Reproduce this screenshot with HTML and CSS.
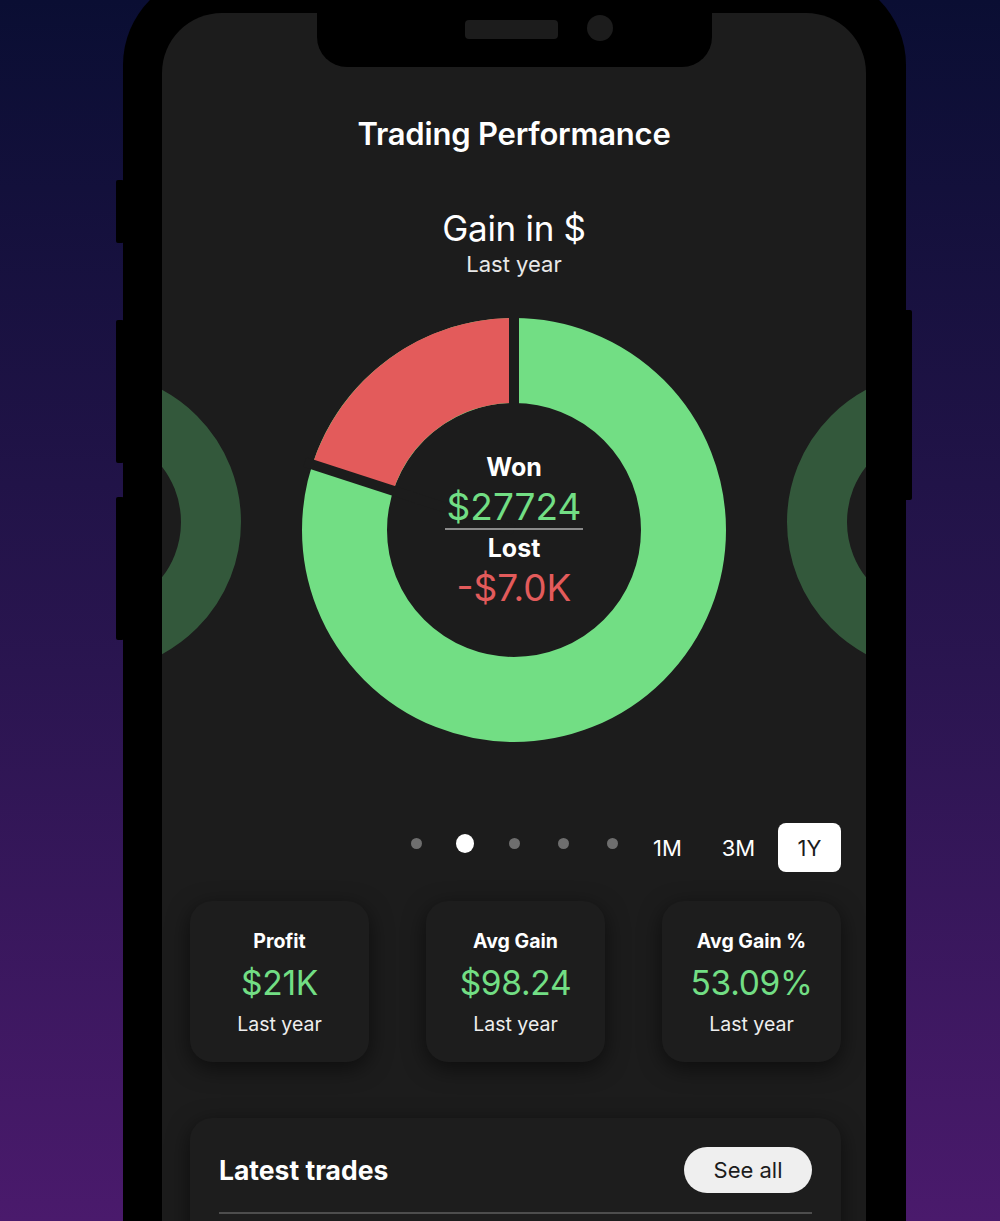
FILE: index.html
```html
<!DOCTYPE html>
<html lang="en">
<head>
  <meta charset="UTF-8">
  <title>Trading Performance</title>
  <link rel="stylesheet" href="styles.css">
</head>
<body>
  <div id="phone">
    <span class="side-btn mute"></span>
    <span class="side-btn vol-up"></span>
    <span class="side-btn vol-down"></span>
    <span class="side-btn power"></span>

    <div id="screen">
      <div id="notch">
        <span class="speaker"></span>
        <span class="camera"></span>
      </div>

      <h1 class="page-title">Trading Performance</h1>

      <div class="chart-head">
        <div class="chart-title">Gain in $</div>
        <div class="chart-sub">Last year</div>
      </div>

      <div id="carousel">
        <svg class="ghost" width="300" height="300" viewBox="0 0 300 300">
          <circle cx="150" cy="150" r="120" fill="none" stroke="#33583b" stroke-width="60"/>
        </svg>

        <div class="donut">
          <svg width="440" height="440" viewBox="0 0 440 440">
            <circle cx="220" cy="220" r="169.5" fill="none" stroke="#72de84" stroke-width="85"/>
            <path d="M 220 50.5 A 169.5 169.5 0 0 0 58.8 167.6" fill="none" stroke="#e35b5b" stroke-width="85"/>
            <line x1="220" y1="220" x2="220" y2="0" stroke="#1c1c1c" stroke-width="10"/>
            <line x1="220" y1="220" x2="10.8" y2="152" stroke="#1c1c1c" stroke-width="10"/>
          </svg>
          <div class="donut-center">
            <div class="label won-label">Won</div>
            <div class="won">$27724</div>
            <div class="label lost-label">Lost</div>
            <div class="lost">-$7.0K</div>
          </div>
        </div>

        <svg class="ghost" width="300" height="300" viewBox="0 0 300 300">
          <circle cx="150" cy="150" r="120" fill="none" stroke="#33583b" stroke-width="60"/>
        </svg>
      </div>

      <div class="pager-row">
        <div class="dots">
          <span class="dot"></span>
          <span class="dot active"></span>
          <span class="dot"></span>
          <span class="dot"></span>
          <span class="dot"></span>
        </div>
        <div class="periods">
          <button class="period">1M</button>
          <button class="period">3M</button>
          <button class="period selected">1Y</button>
        </div>
      </div>

      <div class="stats">
        <div class="stat-card">
          <div class="stat-title">Profit</div>
          <div class="stat-value">$21K</div>
          <div class="stat-sub">Last year</div>
        </div>
        <div class="stat-card">
          <div class="stat-title">Avg Gain</div>
          <div class="stat-value">$98.24</div>
          <div class="stat-sub">Last year</div>
        </div>
        <div class="stat-card">
          <div class="stat-title">Avg Gain %</div>
          <div class="stat-value">53.09%</div>
          <div class="stat-sub">Last year</div>
        </div>
      </div>

      <div class="trades-card">
        <div class="trades-head">
          <h2>Latest trades</h2>
          <button class="see-all">See all</button>
        </div>
        <div class="trades-divider"></div>
      </div>
    </div>
  </div>
</body>
</html>
```

FILE: styles.css
```css
html, body {
  margin: 0;
  padding: 0;
  height: 100%;
  overflow: hidden;
}

body {
  background: linear-gradient(to bottom, #0a0e33 0%, #2a1550 55%, #4a1a6c 100%);
  font-family: Inter, "Liberation Sans", sans-serif;
  color: #fff;
}

#phone {
  position: relative;
  width: 704px;
  margin: -27px 0 0 123px;
  padding: 40px 40px 0 39px;
  height: 1300px;
  background: #000;
  border-radius: 92px 92px 0 0;
}

.side-btn {
  position: absolute;
  width: 8px;
  background: #000;
  border-radius: 2px;
}

.side-btn.mute { left: -7px; top: 207px; height: 63px; }
.side-btn.vol-up { left: -7px; top: 347px; height: 143px; }
.side-btn.vol-down { left: -7px; top: 524px; height: 143px; }
.side-btn.power { right: -6px; top: 337px; height: 190px; }

#screen {
  position: relative;
  height: 100%;
  background: #1c1c1c;
  border-radius: 60px 60px 0 0;
  overflow: hidden;
  display: flex;
  flex-direction: column;
  align-items: center;
}

#notch {
  position: absolute;
  top: 0;
  left: 155px;
  width: 395px;
  height: 54px;
  background: #000;
  border-radius: 0 0 30px 30px;
}

#notch .speaker {
  position: absolute;
  left: 148px;
  top: 7px;
  width: 93px;
  height: 19px;
  background: #1c1c1c;
  border-radius: 4px;
}

#notch .camera {
  position: absolute;
  left: 270px;
  top: 2px;
  width: 26px;
  height: 26px;
  background: #1c1c1c;
  border-radius: 50%;
}

.page-title {
  margin: 103px 0 0;
  font-size: 31px;
  font-weight: 600;
  line-height: 36px;
  letter-spacing: -0.2px;
}

.chart-head {
  margin-top: 56px;
  text-align: center;
}

.chart-title {
  font-size: 35px;
  line-height: 40px;
  letter-spacing: -0.3px;
}

.chart-sub {
  margin-top: 3px;
  font-size: 22px;
  line-height: 26px;
  color: #e8e8e8;
}

#carousel {
  display: flex;
  justify-content: center;
  align-items: center;
  gap: 53px;
  width: 100%;
  margin-top: 33px;
}

.ghost {
  flex-shrink: 0;
  margin-bottom: 16px;
}

.donut {
  flex-shrink: 0;
  display: grid;
  place-items: center;
  width: 440px;
  height: 440px;
}

.donut svg,
.donut-center {
  grid-area: 1 / 1;
}

.donut-center {
  display: flex;
  flex-direction: column;
  align-items: center;
}

.donut-center .label {
  font-size: 25px;
  font-weight: 700;
  line-height: 30px;
}

.donut-center .won-label {
  margin-bottom: 4px;
}

.donut-center .won {
  color: #72de84;
  font-size: 37px;
  line-height: 42px;
  padding: 0 2px;
  border-bottom: 2px solid #8a8a8a;
}

.donut-center .lost-label {
  margin-top: 3px;
  margin-bottom: 4px;
}

.donut-center .lost {
  color: #e35b5b;
  font-size: 37px;
  line-height: 42px;
}

.pager-row {
  align-self: stretch;
  display: flex;
  justify-content: flex-end;
  align-items: center;
  gap: 15px;
  padding-right: 25px;
  margin-top: 73px;
}

.dots {
  display: flex;
  align-items: center;
  gap: 31px;
  margin-top: -9px;
}

.dot {
  display: flex;
  justify-content: center;
  align-items: center;
  width: 18px;
  height: 18px;
}

.dot::before {
  content: "";
  width: 11px;
  height: 11px;
  border-radius: 50%;
  background: #6e6e6e;
}

.dot.active::before {
  width: 19px;
  height: 19px;
  background: #fff;
}

.periods {
  display: flex;
  gap: 8px;
}

.period {
  width: 63px;
  height: 49px;
  border: none;
  border-radius: 8px;
  background: transparent;
  color: #fff;
  font-family: Inter, "Liberation Sans", sans-serif;
  font-size: 22px;
  padding: 0;
}

.period.selected {
  background: #fff;
  color: #1c1c1c;
}

.stats {
  align-self: stretch;
  display: flex;
  justify-content: space-between;
  padding: 0 25px 0 28px;
  margin-top: 29px;
}

.stat-card {
  box-sizing: border-box;
  width: 179px;
  height: 161px;
  padding-top: 28px;
  border-radius: 22px;
  background: #1d1d1d;
  box-shadow: 0 6px 22px rgba(0, 0, 0, 0.55);
  display: flex;
  flex-direction: column;
  align-items: center;
}

.stat-title {
  font-size: 19.5px;
  font-weight: 700;
  line-height: 24px;
}

.stat-value {
  margin-top: 10px;
  color: #72de84;
  font-size: 33.5px;
  line-height: 40px;
  letter-spacing: -0.3px;
}

.stat-sub {
  margin-top: 9px;
  font-size: 19.5px;
  line-height: 24px;
  color: #eee;
}

.trades-card {
  align-self: stretch;
  margin: 56px 25px 0 28px;
  padding: 29px 29px 0;
  border-radius: 22px;
  background: #1d1d1d;
  box-shadow: 0 6px 22px rgba(0, 0, 0, 0.55);
  height: 200px;
}

.trades-head {
  display: flex;
  justify-content: space-between;
  align-items: center;
}

.trades-head h2 {
  margin: 0;
  font-size: 26.5px;
  font-weight: 700;
}

.see-all {
  width: 128px;
  height: 46px;
  border: none;
  border-radius: 23px;
  background: #efefef;
  color: #1c1c1c;
  font-family: Inter, "Liberation Sans", sans-serif;
  font-size: 22px;
  padding: 0;
}

.trades-divider {
  height: 2px;
  background: #4d4d4d;
  margin-top: 19px;
}
```
